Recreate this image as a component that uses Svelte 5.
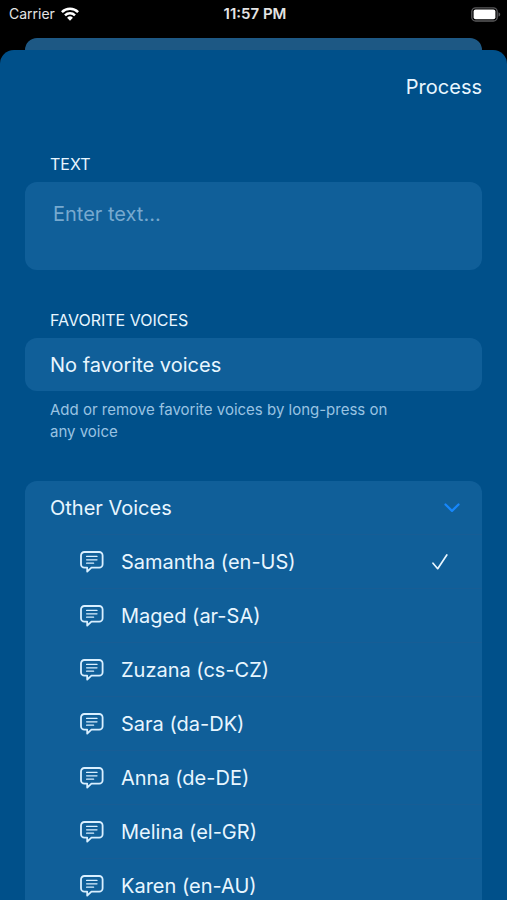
<script>
  const voices = [
    'Samantha (en-US)',
    'Maged (ar-SA)',
    'Zuzana (cs-CZ)',
    'Sara (da-DK)',
    'Anna (de-DE)',
    'Melina (el-GR)',
    'Karen (en-AU)'
  ];
  let selected = $state(voices[0]);
  let open = $state(true);
  let text = $state('');
</script>

<div class="screen">
  <header class="status">
    <div class="carrier">
      <span>Carrier</span>
      <svg width="18" height="14" viewBox="0 0 18 14" aria-hidden="true">
        <g fill="none" stroke="#fff" stroke-width="2.5">
          <path d="M.9 5.1a11.5 11.5 0 0 1 16.2 0" />
          <path d="M4 8.4a7.1 7.1 0 0 1 10 0" />
        </g>
        <path d="M9 13.7 6.1 10.7a4.2 4.2 0 0 1 5.8 0Z" fill="#fff" />
      </svg>
    </div>
    <time>11:57 PM</time>
    <svg class="battery" width="30" height="15" viewBox="0 0 30 15" aria-hidden="true">
      <rect x=".8" y=".8" width="25.4" height="13.2" rx="3.8" fill="none" stroke="#59595b" stroke-width="1.3" />
      <rect x="2.6" y="2.5" width="21.8" height="9.8" rx="2" fill="#fff" />
      <path d="M27.5 5.2c2.3.8 2.3 3.6 0 4.4Z" fill="#59595b" />
    </svg>
  </header>

  <div class="behind"></div>

  <main class="sheet">
    <nav><button class="process">Process</button></nav>

    <section class="group">
      <label class="caption" for="entry">TEXT</label>
      <textarea id="entry" class="card" placeholder="Enter text..." bind:value={text}></textarea>
    </section>

    <section class="group">
      <h2 class="caption">FAVORITE VOICES</h2>
      <div class="card row">No favorite voices</div>
      <p>Add or remove favorite voices by long-press on any voice</p>
    </section>

    <section class="card list">
      <button class="row" aria-expanded={open} onclick={() => (open = !open)}>
        <span>Other Voices</span>
        <svg class="chevron" class:closed={!open} width="16" height="10" viewBox="0 0 16 10" aria-hidden="true">
          <path d="m1.5 1.5 6.5 6.3 6.5-6.3" fill="none" stroke="#1787fb" stroke-width="2.3" stroke-linecap="round" stroke-linejoin="round" />
        </svg>
      </button>
      {#if open}
        <ul>
          {#each voices as voice}
            <li>
              <button class="row voice" aria-pressed={selected === voice} onclick={() => (selected = voice)}>
                <svg width="24" height="22" viewBox="0 0 24 22" fill="none" stroke="#d9efff" stroke-linecap="round" stroke-linejoin="round" aria-hidden="true">
                  <path stroke-width="1.8" d="M4.4 1h14.8A3.4 3.4 0 0 1 22.6 4.4v8.9a3.4 3.4 0 0 1-3.4 3.4h-7.8l-4.2 3.9v-3.9H4.4A3.4 3.4 0 0 1 1 13.3V4.4A3.4 3.4 0 0 1 4.4 1Z" />
                  <path stroke-width="1.3" d="M6.6 5.4h10.4M6.6 8.8h10.4M6.6 12.2h7" />
                </svg>
                <span>{voice}</span>
                {#if selected === voice}
                  <svg class="check" width="16" height="16" viewBox="0 0 16 16" aria-hidden="true">
                    <path d="m1 9.2 4.7 5.5L14.8 1" fill="none" stroke="#e8f6ff" stroke-width="1.7" stroke-linecap="round" stroke-linejoin="round" />
                  </svg>
                {/if}
              </button>
            </li>
          {/each}
        </ul>
      {/if}
    </section>
  </main>
</div>

<style>
  :global(body) {
    margin: 0;
    background: #000;
  }
  .screen {
    display: flex;
    flex-direction: column;
    height: 100vh;
    overflow: hidden;
    color: #e8f6ff;
    font: 20px/24px Inter, 'Liberation Sans', sans-serif;
  }
  .status {
    display: grid;
    grid-template-columns: 1fr auto 1fr;
    align-items: center;
    height: 28px;
    padding: 0 6px 0 9px;
    margin-bottom: 10px;
    color: #e4e4e4;
    font-size: 14px;
    line-height: 28px;
  }
  .carrier {
    display: flex;
    align-items: center;
    gap: 6px;
  }
  time {
    font-size: 15px;
    font-weight: 600;
  }
  .battery {
    justify-self: end;
  }
  .behind {
    flex: none;
    height: 12px;
    margin: 0 25px;
    border-radius: 12px 12px 0 0;
    background: #1d5884;
  }
  .sheet {
    flex: 1;
    min-height: 0;
    box-sizing: border-box;
    padding: 0 25px;
    overflow-y: auto;
    scrollbar-width: none;
    border-radius: 14px 14px 0 0;
    background: #00508a;
  }
  button {
    padding: 0;
    border: 0;
    background: none;
    color: inherit;
    font: inherit;
    text-align: left;
    cursor: pointer;
  }
  nav {
    display: flex;
    justify-content: flex-end;
    padding: 25px 0 55px;
  }
  .group {
    margin-bottom: 40px;
  }
  .caption {
    display: block;
    margin: 0;
    padding: 0 25px 8px;
    font-size: 16px;
    font-weight: 400;
    line-height: 20px;
  }
  .card {
    border-radius: 12px;
    background: #105f99;
  }
  textarea {
    display: block;
    box-sizing: border-box;
    width: 100%;
    height: 88px;
    padding: 20px 28px;
    border: 0;
    outline: 0;
    resize: none;
    color: inherit;
    font: inherit;
  }
  textarea::placeholder {
    color: #77a9cf;
    opacity: 1;
  }
  .row {
    display: flex;
    align-items: center;
    box-sizing: border-box;
    width: 100%;
    height: 53px;
    padding: 0 22px 0 25px;
  }
  p {
    margin: 0;
    padding: 8px 80px 0 25px;
    color: #99c3e2;
    font-size: 15px;
    line-height: 22px;
  }
  .group:has(p) {
    margin-bottom: 38px;
  }
  .list {
    border-radius: 12px 12px 0 0;
  }
  .chevron {
    margin-left: auto;
  }
  .closed {
    transform: rotate(-90deg);
  }
  ul {
    margin: 0;
    padding: 0;
    list-style: none;
  }
  li {
    padding-left: 55px;
  }
  .voice {
    gap: 17px;
    height: 54px;
    padding: 0 34px 0 0;
    border-top: 1px solid #175d95;
  }
  .check {
    margin-left: auto;
  }
</style>
